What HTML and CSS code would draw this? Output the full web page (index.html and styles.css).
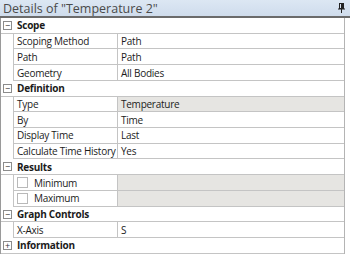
FILE: index.html
```html
<!DOCTYPE html>
<html lang="en">
<head>
    <meta charset="UTF-8">
    <title>Details of "Temperature 2"</title>
    <link rel="stylesheet" href="styles.css">
</head>
<body>
    <div class="panel">
        <div class="title">
            <span>Details of "Temperature 2"</span>
            <svg class="pin" width="7" height="10" viewBox="0 0 7 10">
                <rect x="1.5" y="0.5" width="4" height="5" fill="none" stroke="#222"/>
                <rect x="3" y="1" width="2" height="4" fill="#222"/>
                <line x1="0" y1="6" x2="7" y2="6" stroke="#222"/>
                <line x1="3.5" y1="6" x2="3.5" y2="10" stroke="#222"/>
            </svg>
        </div>

        <div class="grid">
            <div class="row cat"><span class="tog">&minus;</span><span class="name">Scope</span></div>
            <div class="row prop"><span class="gut"></span><span class="name">Scoping Method</span><span class="val">Path</span></div>
            <div class="row prop"><span class="gut"></span><span class="name">Path</span><span class="val">Path</span></div>
            <div class="row prop"><span class="gut"></span><span class="name">Geometry</span><span class="val">All Bodies</span></div>

            <div class="row cat"><span class="tog">&minus;</span><span class="name">Definition</span></div>
            <div class="row prop"><span class="gut"></span><span class="name">Type</span><span class="val grey">Temperature</span></div>
            <div class="row prop"><span class="gut"></span><span class="name">By</span><span class="val">Time</span></div>
            <div class="row prop"><span class="gut"></span><span class="name">Display Time</span><span class="val">Last</span></div>
            <div class="row prop"><span class="gut"></span><span class="name">Calculate Time History</span><span class="val">Yes</span></div>

            <div class="row cat"><span class="tog">&minus;</span><span class="name">Results</span></div>
            <div class="row prop"><span class="gut"></span><span class="name"><i class="check"></i>Minimum</span><span class="val grey"></span></div>
            <div class="row prop"><span class="gut"></span><span class="name"><i class="check"></i>Maximum</span><span class="val grey"></span></div>

            <div class="row cat"><span class="tog">&minus;</span><span class="name">Graph Controls</span></div>
            <div class="row prop"><span class="gut"></span><span class="name">X-Axis</span><span class="val">S</span></div>

            <div class="row cat"><span class="tog">+</span><span class="name">Information</span></div>
        </div>
    </div>
</body>
</html>
```

FILE: styles.css
```css
/* Page */
body {
    margin: 0;
    background-color: #f2f2f2;
    font-family: "Open Sans", "Liberation Sans", sans-serif;
    font-size: 10px;
    letter-spacing: -0.25px;
    color: #1b1b1b;
}

.panel {
    width: 350px;
    height: 256px;
    overflow: hidden;
    background-color: #fff;
}

/* Title bar */
.title {
    height: 16px;
    display: flex;
    align-items: center;
    justify-content: space-between;
    padding: 0 5px 0 3px;
    background: linear-gradient(#dce7f3, #cfdcec);
    border-bottom: 2px solid #6b6b6b;
    color: #4a4a4a;
    font-size: 12.5px;
    letter-spacing: 0;
}

.pin {
    display: block;
}

/* Property grid */
.grid {
    width: 345px;
    border-right: 1px solid #b4b4b4;
    border-left: 1px solid #9a9a9a;
    box-sizing: border-box;
}

.row {
    display: grid;
    grid-template-columns: 12px 105px 1fr;
    height: 15.72px;
    box-sizing: border-box;
    border-bottom: 1px solid #c4c4c4;
    line-height: 14px;
}

.row span {
    display: flex;
    align-items: center;
    white-space: nowrap;
}

.cat .name {
    grid-column: 2 / 4;
    padding-left: 4px;
    font-weight: bold;
}

.prop .name {
    border-left: 1px solid #c4c4c4;
    border-right: 1px solid #c4c4c4;
    padding-left: 3px;
    overflow: hidden;
}

.prop .gut {
    margin-bottom: -1px;
    background-color: #fff;
}

.val {
    padding-left: 3px;
}

.val.grey {
    background-color: #e6e5e2;
}

/* Expand / collapse box */
.tog {
    width: 7px;
    height: 7px;
    margin: 3px 0 0 2px;
    border: 1px solid #8c8c8c;
    justify-content: center;
    font-size: 9px;
    line-height: 7px;
    color: #333;
}

/* Check box */
.check {
    display: inline-block;
    width: 9px;
    height: 9px;
    margin-right: 6px;
    border: 1px solid #b9b9b9;
    background-color: #fff;
}
```
